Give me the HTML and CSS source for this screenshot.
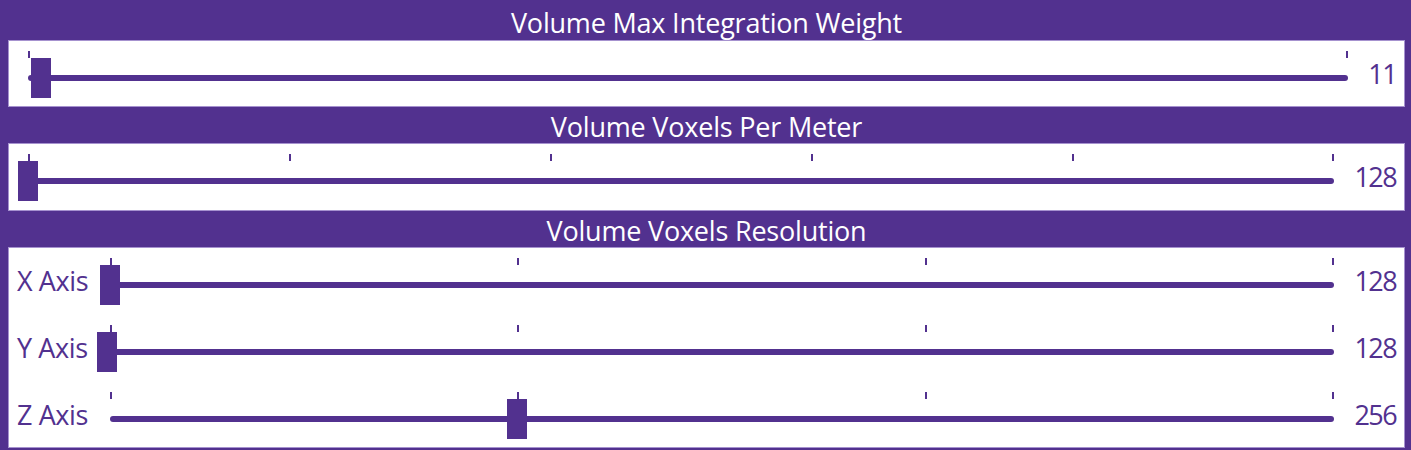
FILE: index.html
```html
<!DOCTYPE html>
<html lang="en">
<head>
<meta charset="utf-8">
<title>Volume Settings</title>
<link rel="stylesheet" href="styles.css">
</head>
<body>
<div class="settings">
  <div class="section-title first">Volume Max Integration Weight</div>
  <div class="section-body">
    <div class="slider-row">
      <div class="slider">
        <div class="ticks"><span></span><span></span></div>
        <div class="track"></div>
        <div class="thumb" style="left: 3px"></div>
      </div>
      <div class="value">11</div>
    </div>
  </div>

  <div class="section-title">Volume Voxels Per Meter</div>
  <div class="section-body tall">
    <div class="slider-row">
      <div class="slider">
        <div class="ticks"><span></span><span></span><span></span><span></span><span></span><span></span></div>
        <div class="track"></div>
        <div class="thumb" style="left: -10px"></div>
      </div>
      <div class="value">128</div>
    </div>
  </div>

  <div class="section-title">Volume Voxels Resolution</div>
  <div class="section-body axes">
    <div class="slider-row">
      <div class="axis-label">X Axis</div>
      <div class="slider">
        <div class="ticks"><span></span><span></span><span></span><span></span></div>
        <div class="track"></div>
        <div class="thumb" style="left: -10px"></div>
      </div>
      <div class="value">128</div>
    </div>
    <div class="slider-row">
      <div class="axis-label">Y Axis</div>
      <div class="slider">
        <div class="ticks"><span></span><span></span><span></span><span></span></div>
        <div class="track"></div>
        <div class="thumb" style="left: -13px"></div>
      </div>
      <div class="value">128</div>
    </div>
    <div class="slider-row">
      <div class="axis-label">Z Axis</div>
      <div class="slider">
        <div class="ticks"><span></span><span></span><span></span><span></span></div>
        <div class="track"></div>
        <div class="thumb" style="left: calc(33.33% - 11px)"></div>
      </div>
      <div class="value">256</div>
    </div>
  </div>
</div>
</body>
</html>
```

FILE: styles.css
```css
html, body {
  margin: 0;
  padding: 0;
  background: #52318f;
}

body {
  width: 1411px;
  height: 450px;
  overflow: hidden;
  font-family: "Open Sans", "Noto Sans", sans-serif;
  color: #52318f;
}

.settings {
  display: flex;
  flex-direction: column;
  padding: 0 6px 0 8px;
}

/* purple band with the section caption */
.section-title {
  height: 36px;
  display: flex;
  align-items: center;
  justify-content: center;
  color: #ffffff;
  font-size: 27px;
  letter-spacing: -0.2px;
  padding-top: 2px;
  box-sizing: border-box;
}

.section-title.first {
  height: 40px;
  padding-top: 4px;
}

/* white card holding the sliders */
.section-body {
  background: #ffffff;
  box-shadow: inset 0 0 0 1px #a692cf;
  padding: 0 10px 0 20px;
  height: 67px;
  box-sizing: border-box;
}

.section-body.tall {
  height: 68px;
}

.section-body.axes {
  height: auto;
  padding-left: 9px;
}

.slider-row {
  display: flex;
  align-items: center;
  height: 67px;
}

.axis-label {
  width: 93px;
  flex: none;
  font-size: 27px;
  letter-spacing: -0.4px;
}

.slider {
  position: relative;
  flex: 1;
  height: 67px;
  align-self: flex-start;
}

.ticks {
  display: flex;
  justify-content: space-between;
  height: 7px;
  margin-top: 11px;
}

.ticks span {
  width: 2px;
  height: 7px;
  background: #52318f;
}

.track {
  height: 6px;
  margin-top: 17px;
  border-radius: 3px;
  background: #52318f;
}

.thumb {
  position: absolute;
  top: 18px;
  width: 20px;
  height: 40px;
  background: #52318f;
}

.value {
  flex: none;
  margin-left: 20px;
  margin-right: -1px;
  font-size: 27px;
  letter-spacing: -1.6px;
}
```
